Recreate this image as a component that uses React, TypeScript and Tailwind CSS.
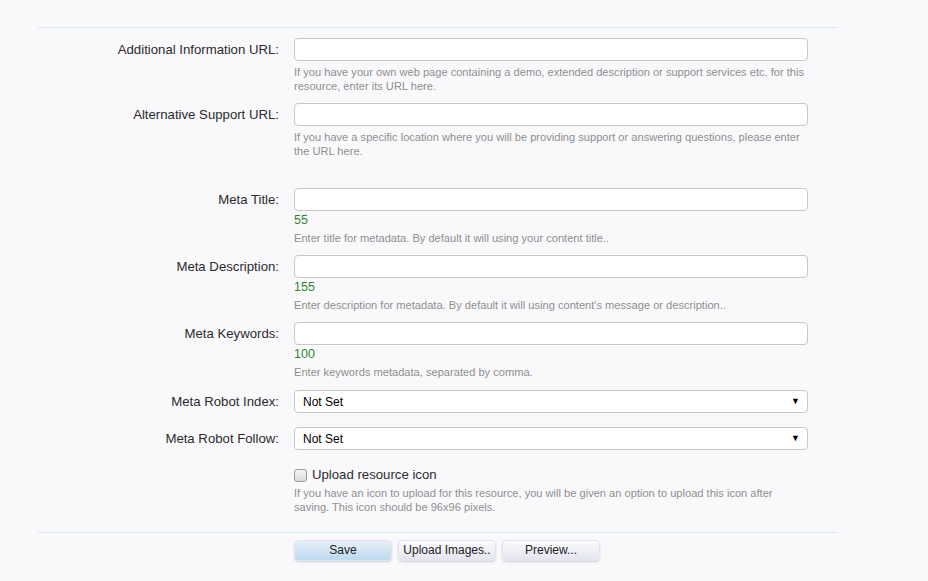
import React from 'react'

type TextRowProps = {
  label: string
  hint: string[]
  counter?: string
}

const font = { fontFamily: '"Liberation Sans", Arial, sans-serif' }

const Hint = ({ lines, className = '' }: { lines: string[]; className?: string }) => (
  <div className={`whitespace-nowrap text-[11.1px] leading-[14px] text-[#8f8f8f] ${className}`}>
    {lines.map((l) => (
      <div key={l}>{l}</div>
    ))}
  </div>
)

const TextRow = ({ label, hint, counter }: TextRowProps) => (
  <div className="grid grid-cols-[241px_514px] gap-x-[15px]">
    <label className="text-right text-[13.2px] leading-[23px] text-[#2b2b2b]">{label}</label>
    <div>
      <input className="block h-[23px] w-full rounded-[4px] border border-[#c8c8c8] bg-white px-2 text-[12px] outline-none" />
      {counter ? (
        <>
          <div className="text-[12.5px] leading-[18px] text-[#2f862f]">{counter}</div>
          <Hint lines={hint} className="mt-[2px]" />
        </>
      ) : (
        <Hint lines={hint} className="mt-[4px]" />
      )}
    </div>
  </div>
)

const SelectRow = ({ label }: { label: string }) => (
  <div className="grid grid-cols-[241px_514px] gap-x-[15px]">
    <label className="text-right text-[13.2px] leading-[23px] text-[#2b2b2b]">{label}</label>
    <div className="flex h-[23px] items-center justify-between rounded-[4px] border border-[#c8c8c8] bg-white pl-2 pr-[7px] text-[12px] text-black">
      <span>Not Set</span>
      <span className="text-[9px] leading-none">▼</span>
    </div>
  </div>
)

const Button = ({ children, primary }: { children: React.ReactNode; primary?: boolean }) => (
  <button
    className={`h-[21px] w-[98px] rounded-[5px] border border-[#e4e4ec] text-[12px] leading-[19px] text-[#222] shadow-[0_1px_2px_rgba(0,0,0,0.18)] ${
      primary ? 'bg-gradient-to-b from-[#e6f1fa] to-[#bcd9ee]' : 'bg-gradient-to-b from-[#fbfbfd] to-[#e4e4ee]'
    }`}
  >
    {children}
  </button>
)

export default function App() {
  return (
    <div className="min-h-[581px] w-[928px] bg-[#f9f9fc]" style={font}>
      <div className="ml-[38px] w-[800px] pt-[27px]">
        <div className="border-t border-[#d7e9f5]" />

        <div className="mt-[10px] flex flex-col gap-[10px]">
          <TextRow
            label="Additional Information URL:"
            hint={[
              'If you have your own web page containing a demo, extended description or support services etc. for this',
              'resource, enter its URL here.',
            ]}
          />
          <TextRow
            label="Alternative Support URL:"
            hint={[
              'If you have a specific location where you will be providing support or answering questions, please enter',
              'the URL here.',
            ]}
          />
        </div>

        <div className="mt-[30px] flex flex-col gap-[10px]">
          <TextRow
            label="Meta Title:"
            counter="55"
            hint={['Enter title for metadata. By default it will using your content title..']}
          />
          <TextRow
            label="Meta Description:"
            counter="155"
            hint={["Enter description for metadata. By default it will using content's message or description.."]}
          />
          <TextRow
            label="Meta Keywords:"
            counter="100"
            hint={['Enter keywords metadata, separated by comma.']}
          />
        </div>

        <div className="mt-[11px] flex flex-col gap-[14px]">
          <SelectRow label="Meta Robot Index:" />
          <SelectRow label="Meta Robot Follow:" />
        </div>

        <div className="mt-[14px] grid grid-cols-[241px_514px] gap-x-[15px]">
          <div />
          <div>
            <label className="flex h-[22px] items-center gap-[5px] text-[13.2px] text-[#2b2b2b]">
              <span className="inline-block h-[13px] w-[13px] rounded-[3px] border border-[#9a9a9a] bg-gradient-to-b from-[#f4f4f4] to-[#dcdcdc]" />
              Upload resource icon
            </label>
            <Hint
              lines={[
                'If you have an icon to upload for this resource, you will be given an option to upload this icon after',
                'saving. This icon should be 96x96 pixels.',
              ]}
            />
          </div>
        </div>

        <div className="mt-[18px] border-t border-[#d7e9f5]" />

        <div className="mt-[7px] grid grid-cols-[241px_514px] gap-x-[15px]">
          <div />
          <div className="flex gap-[6px]">
            <Button primary>Save</Button>
            <Button>Upload Images..</Button>
            <Button>Preview...</Button>
          </div>
        </div>
      </div>
    </div>
  )
}
